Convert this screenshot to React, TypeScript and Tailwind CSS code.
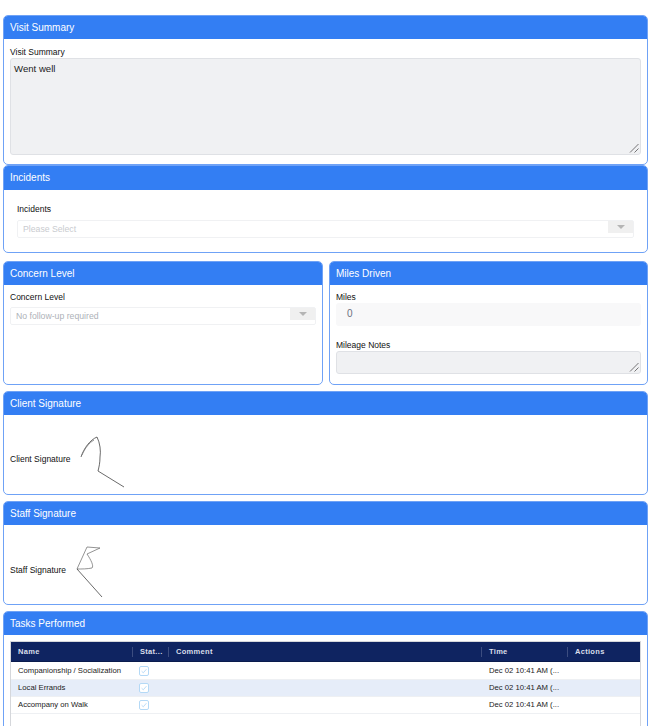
import React from "react";

const font = { fontFamily: '"Liberation Sans", Arial, sans-serif' };

function Card({ title, className, headerClass = "h-[23px]", children }: { title: string; className: string; headerClass?: string; children: React.ReactNode }) {
  return (
    <section className={`flex flex-col rounded-[5px] border border-[#6fa2f6] bg-white overflow-hidden ${className}`}>
      <h2 className={`flex shrink-0 items-center bg-[#337ef3] pl-[6px] text-[10px] font-normal leading-none text-white ${headerClass}`}>{title}</h2>
      {children}
    </section>
  );
}

function Grip() {
  return (
    <svg className="absolute bottom-[1px] right-[1px]" width="10" height="10" viewBox="0 0 10 10">
      <path d="M1 9.5L9.5 1M5.5 9.5L9.5 5.5" stroke="#555" strokeWidth="0.8" fill="none" />
    </svg>
  );
}

function TextArea({ className, text }: { className: string; text?: string }) {
  return (
    <div className={`relative rounded-[3px] border border-[#dfe1e5] bg-[#f0f1f3] ${className}`}>
      {text && <p className="pl-[3px] pt-[3px] text-[9.6px] leading-[14px] text-[#222]">{text}</p>}
      <Grip />
    </div>
  );
}

function SelectBox({ text, className, color }: { text: string; className: string; color: string }) {
  return (
    <div className={`flex h-[18px] items-start justify-between rounded-[2px] border border-[#f0f1f3] bg-white ${className}`}>
      <span className={`pl-[5px] text-[8.7px] leading-[17px] ${color}`}>{text}</span>
      <span className="flex h-3 w-[25px] items-center justify-center bg-[#f0f0f0]">
        <span className="h-0 w-0 border-x-[4px] border-t-[4px] border-x-transparent border-t-[#b5b5b5]" />
      </span>
    </div>
  );
}

function Check() {
  return (
    <svg width="10" height="10" viewBox="0 0 10 10" className="block">
      <rect x="0.5" y="0.5" width="9" height="9" rx="1.5" fill="#fff" stroke="#b4d9f6" />
      <path d="M2.6 5.2L4.3 6.8L7.4 3.2" stroke="#a9d3f5" strokeWidth="0.8" fill="none" />
    </svg>
  );
}

const rows = [
  { name: "Companionship / Socialization", bg: "bg-white" },
  { name: "Local Errands", bg: "bg-[#e6edf9]" },
  { name: "Accompany on Walk", bg: "bg-white" },
];

const grid = "grid grid-cols-[121px_36px_313px_86px_1fr]";

export default function App() {
  return (
    <div style={font} className="h-[726px] w-[649px] overflow-hidden bg-white pl-[3px] pr-[1px] pt-[15px] text-[#222]">
      <Card title="Visit Summary" className="h-[150px]">
        <div className="px-[6px]">
          <label className="mt-[7px] block text-[8.5px] leading-[12px] text-[#111]">Visit Summary</label>
          <TextArea className="h-[97px]" text="Went well" />
        </div>
      </Card>

      <Card title="Incidents" className="h-[88px]" headerClass="h-[24px]">
        <div className="px-[13px]">
          <label className="mt-[13px] block text-[8.5px] leading-[12px] text-[#111]">Incidents</label>
          <SelectBox className="mt-[5px]" text="Please Select" color="text-[#c9cbcf]" />
        </div>
      </Card>

      <div className="mt-[8px] flex h-[124px] gap-[6px]">
        <Card title="Concern Level" className="w-[320px]">
          <div className="px-[6px]">
            <label className="mt-[6px] block text-[8.5px] leading-[12px] text-[#111]">Concern Level</label>
            <SelectBox className="mt-[4px]" text="No follow-up required" color="text-[#aeb2b8]" />
          </div>
        </Card>
        <Card title="Miles Driven" className="flex-1">
          <div className="px-[6px]">
            <label className="mt-[6px] block text-[8.5px] leading-[12px] text-[#111]">Miles</label>
            <div className="h-[23px] rounded-[3px] bg-[#f8f8f9] pl-[11px] text-[10px] leading-[22px] text-[#6b7280]">0</div>
            <label className="mt-[13px] block text-[8.5px] leading-[12px] text-[#111]">Mileage Notes</label>
            <TextArea className="h-[23px]" />
          </div>
        </Card>
      </div>

      <Card title="Client Signature" className="mt-[6px] h-[104px]">
        <div className="flex flex-1 items-center px-[6px]">
          <span className="relative top-[5px] text-[8.5px] text-[#111]">Client Signature</span>
          <svg width="50" height="54" viewBox="0 0 50 54" className="relative top-[7px] ml-[9px]">
            <path d="M2 22C5 13 11 5 18 2C21 8 22 16 21 22C21 28 20 32 19 36L45 52" fill="none" stroke="#444" strokeWidth="0.8" />
            <path d="M3 20C6 13 10 8 15 5" fill="none" stroke="#777" strokeWidth="0.8" />
          </svg>
        </div>
      </Card>

      <Card title="Staff Signature" className="mt-[6px] h-[104px]">
        <div className="flex flex-1 items-center px-[6px]">
          <span className="relative top-[6px] text-[8.5px] text-[#111]">Staff Signature</span>
          <svg width="30" height="54" viewBox="0 0 30 54" className="relative top-[8px] ml-[9px]">
            <path d="M12 1L25 2L12 8C16 14 19 20 17 22C12 23 7 23 2 23L12 1" fill="none" stroke="#666" strokeWidth="0.7" />
            <path d="M2 23L27 51" fill="none" stroke="#444" strokeWidth="0.8" />
          </svg>
        </div>
      </Card>

      <Card title="Tasks Performed" className="mt-[6px] h-[140px]">
        <div className="mx-[6px] mt-[6px] flex-1 border-x border-t border-[#d5d7db]">
          <div className={`${grid} h-[20px] items-center border-b border-[#0a1b4d] bg-[#0f2461] text-[7.5px] font-bold tracking-[0.3px] text-[#d9deea]`}>
            {["Name", "Stat...", "Comment", "Time", "Actions"].map((h, i) => (
              <div key={h} className={`flex h-[10px] items-center pl-[7px] ${i > 0 ? "border-l border-[#3c4d80]" : ""}`}>{h}</div>
            ))}
          </div>
          <div className="pt-[1px]">
            {rows.map((r) => (
              <div key={r.name} className={`${grid} h-[17px] items-center border-b border-[#eef0f3] text-[7.7px] text-[#222] ${r.bg}`}>
                <div className="pl-[7px] whitespace-nowrap">{r.name}</div>
                <div className="pl-[7px]"><Check /></div>
                <div />
                <div className="pl-[8px] whitespace-nowrap">Dec 02 10:41 AM (...</div>
                <div />
              </div>
            ))}
          </div>
        </div>
      </Card>
    </div>
  );
}
